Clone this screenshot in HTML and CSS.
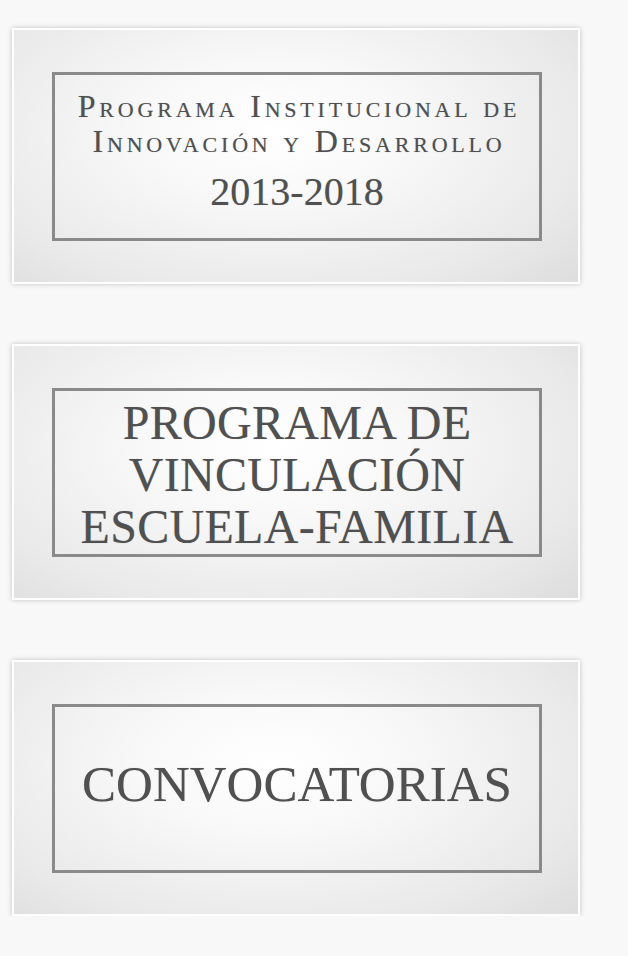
FILE: index.html
```html
<!DOCTYPE html>
<html lang="es">
<head>
<meta charset="utf-8">
<title>Programas</title>
<link rel="stylesheet" href="styles.css">
</head>
<body>
<main class="list">
  <a class="card" href="#">
    <div class="frame">
      <div class="title-sc">Programa Institucional de<br>Innovación y Desarrollo</div>
      <div class="years">2013-2018</div>
    </div>
  </a>
  <a class="card" href="#">
    <div class="frame">
      <div class="title-caps">PROGRAMA DE<br>VINCULACIÓN<br>ESCUELA-FAMILIA</div>
    </div>
  </a>
  <a class="card" href="#">
    <div class="frame">
      <div class="title-big">CONVOCATORIAS</div>
    </div>
  </a>
</main>
</body>
</html>
```
FILE: styles.css
```css
html, body {
  margin: 0;
  padding: 0;
  background: #f8f8f8;
}
body {
  font-family: "Liberation Serif", "Times New Roman", serif;
}
.list {
  display: flex;
  flex-direction: column;
  gap: 60px;
  padding: 28px 0 0 12px;
}
.card {
  box-sizing: border-box;
  display: flex;
  width: 568px;
  height: 256px;
  padding: 42px 36px 41px 38px;
  border: 2px solid #ffffff;
  text-decoration: none;
  background: radial-gradient(ellipse 80% 95% at 46% 40%, #ffffff 0%, #f8f8f8 30%, #e9e9e9 70%, #d9d9d9 100%);
  box-shadow: 0 0 5px rgba(0, 0, 0, 0.22);
}
.frame {
  box-sizing: border-box;
  flex: 1;
  border: 3px solid #8a8a8a;
  display: flex;
  flex-direction: column;
  align-items: center;
  justify-content: center;
  color: #505050;
  text-align: center;
  text-shadow: 0 0 1px rgba(0, 0, 0, 0.25);
}
.title-sc {
  font-size: 32px;
  line-height: 35px;
  font-variant: small-caps;
  letter-spacing: 3.8px;
  margin-right: -4px;
}
.years {
  font-size: 40px;
  line-height: 50px;
  margin: 8px 0 8px;
}
.title-caps {
  font-size: 48px;
  line-height: 52px;
  letter-spacing: 0.3px;
  margin-top: 4px;
}
.title-big {
  font-size: 51px;
  line-height: 56px;
  margin-top: -10px;
}
```
